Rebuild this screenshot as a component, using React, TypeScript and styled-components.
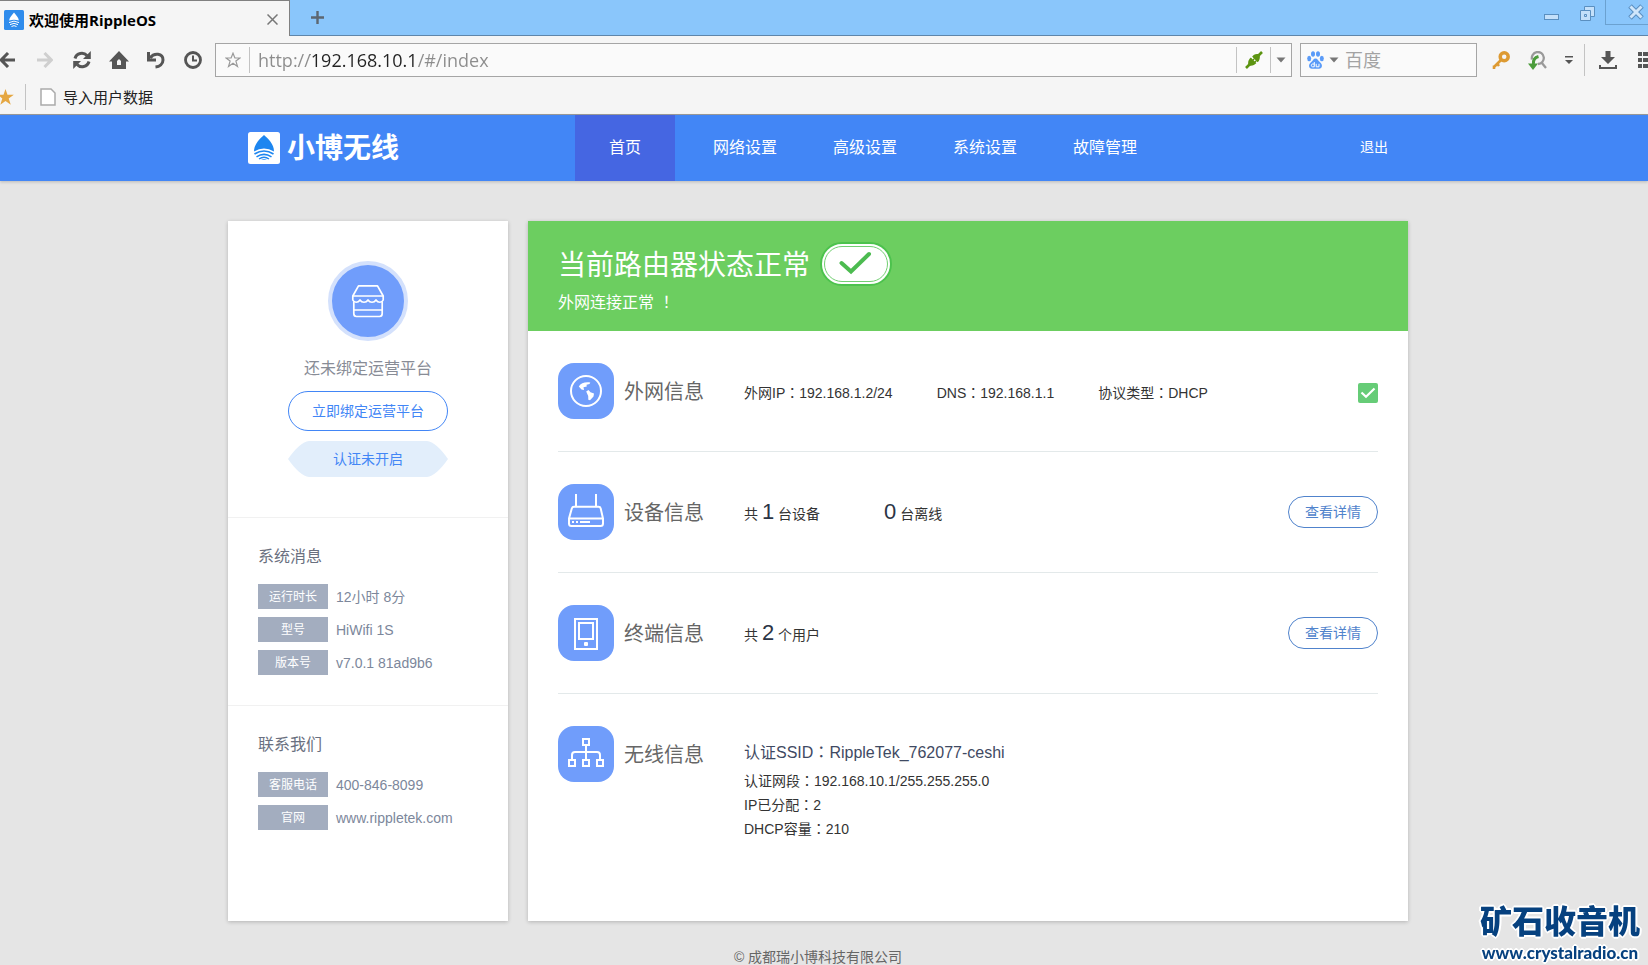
import React from "react";
import styled, { createGlobalStyle, css } from "styled-components";

const GlobalStyle = createGlobalStyle`
  *, *::before, *::after { box-sizing: border-box; }
  body {
    margin: 0;
    background: #e5e5e5;
    color: #333;
    font-family: "Liberation Sans", "Noto Sans CJK SC", sans-serif;
    font-size: 14px;
  }
  button, input { font: inherit; color: inherit; }
  button { background: none; border: 0; padding: 0; cursor: pointer; }
  h1, h2, h3, p, dl, dd, dt, ul { margin: 0; padding: 0; font-weight: 400; }
  a { color: inherit; text-decoration: none; }
  svg { display: block; flex: none; }
`;

const Page = styled.div`
  min-height: 100vh;
  display: flex;
  flex-direction: column;
`;

/* ---------- browser frame ---------- */

const Browser = styled.header`
  background: #f5f5f5;
  border-bottom: 1px solid #9c9c9c;
  font-family: "Open Sans", "Noto Sans CJK SC", sans-serif;
`;

const TabStrip = styled.div`
  display: flex;
  height: 36px;
  background: #8ac6fb;
`;

const Tab = styled.div`
  display: flex;
  align-items: center;
  gap: 5px;
  width: 290px;
  padding: 2px 10px 0 4px;
  background: #f5f5f5;
  border-top: 1px solid #808080;
  border-right: 1px solid #808080;
`;

const TabTitle = styled.span`
  flex: 1;
  color: #000;
  font-size: 15px;
  font-weight: 700;
  line-height: 20px;
`;

const StripRest = styled.div`
  flex: 1;
  display: flex;
  justify-content: space-between;
  align-items: flex-start;
  border-bottom: 1px solid #5f86aa;
`;

const StripButton = styled.button<{ $w: number; $boxed?: boolean }>`
  display: flex;
  justify-content: center;
  align-items: center;
  width: ${(p) => p.$w}px;
  height: ${(p) => (p.$boxed ? 25 : 34)}px;
  ${(p) =>
    p.$boxed &&
    css`
      border-left: 1px solid #6ba1d0;
      border-bottom: 1px solid #6ba1d0;
      padding-left: 18px;
    `}
`;

const WindowControls = styled.div`
  display: flex;
  align-items: flex-start;
`;

const Toolbar = styled.div`
  display: flex;
  align-items: center;
  padding-top: 7px;
`;

const ToolButton = styled.button<{ $w?: number; $start?: boolean }>`
  display: flex;
  align-items: center;
  justify-content: ${(p) => (p.$start ? "flex-start" : "center")};
  flex: none;
  width: ${(p) => p.$w ?? 37}px;
  height: 34px;
`;

const Field = styled.div<{ $w?: number }>`
  display: flex;
  align-items: center;
  ${(p) => (p.$w ? `flex: none; width: ${p.$w}px;` : "flex: 1; min-width: 0;")}
  height: 34px;
  background: #fafafa;
  border: 1px solid #a5a5a5;
`;

const AddressField = styled(Field)`
  margin: 0 8px 0 4px;
`;

const Divider = styled.span<{ $h: number }>`
  flex: none;
  width: 1px;
  height: ${(p) => p.$h}px;
  background: #c3c3c3;
`;

/* The host is darker than the scheme and the path. */
const AddressInput = styled.input`
  flex: 1;
  min-width: 0;
  height: 30px;
  margin: 0;
  padding: 0 0 0 8px;
  border: 0;
  outline: 0;
  font-size: 18px;
  background: linear-gradient(90deg, #8c8c8c 60px, #222 60px, #222 168px, #8c8c8c 168px);
  -webkit-background-clip: text;
  background-clip: text;
  -webkit-text-fill-color: transparent;
`;

const SearchInput = styled.input`
  flex: 1;
  min-width: 0;
  height: 30px;
  padding: 0 0 0 6px;
  border: 0;
  outline: 0;
  background: transparent;
  font-size: 18px;
  &::placeholder { color: #a3a3a3; opacity: 1; }
`;

const Tools = styled.div`
  display: flex;
  align-items: center;
  flex: none;
  width: 171px;
  padding-left: 5px;
  overflow: hidden;
`;

const Bookmarks = styled.div`
  display: flex;
  align-items: center;
  height: 37px;
  padding-top: 2px;
`;

const Bookmark = styled.a`
  display: flex;
  align-items: center;
  gap: 7px;
  margin-left: 14px;
  font-size: 15px;
  color: #222;
`;

/* ---------- router admin ---------- */

const NavBar = styled.nav`
  background: #4286f6;
  padding-right: 12px;
  box-shadow: 0 1px 3px rgba(0, 0, 0, 0.2);
`;

const NavInner = styled.div`
  display: flex;
  align-items: center;
  justify-content: space-between;
  max-width: 1180px;
  height: 66px;
  margin: 0 auto;
  padding: 0 20px;
  color: #fff;
`;

const Brand = styled.a`
  display: flex;
  align-items: center;
  gap: 7px;
  width: 327px;
`;

const BrandName = styled.span`
  padding-top: 2px;
  font-size: 28px;
  line-height: 32px;
  font-weight: 700;
`;

const Menu = styled.div`
  flex: 1;
  display: flex;
  gap: 20px;
`;

const MenuLink = styled.a<{ $active?: boolean }>`
  width: 100px;
  line-height: 66px;
  text-align: center;
  font-size: 16px;
  background: ${(p) => (p.$active ? "#4566e2" : "transparent")};
`;

const Logout = styled.a`
  line-height: 24px;
  padding-bottom: 2px;
`;

const Main = styled.main`
  flex: 1;
  padding: 40px 12px 0 0;
`;

const Columns = styled.div`
  display: flex;
  gap: 20px;
  max-width: 1180px;
  min-height: 700px;
  margin: 0 auto;
`;

const Card = styled.section<{ $w?: number }>`
  ${(p) => (p.$w ? `flex: none; width: ${p.$w}px;` : "flex: 1; min-width: 0;")}
  background: #fff;
  box-shadow: 0 1px 4px rgba(0, 0, 0, 0.22);
`;

const BindPanel = styled.div`
  display: flex;
  flex-direction: column;
  align-items: center;
  padding: 40px 0;
`;

const ShopBadge = styled.div`
  width: 80px;
  height: 80px;
  border: 4px solid #d4e1fc;
  border-radius: 50%;
  background: #709dfb;
`;

const BindText = styled.p`
  margin: 16px 0 10px;
  font-size: 16px;
  line-height: 24px;
  color: #888c96;
`;

const OutlineButton = styled.button<{ $large?: boolean }>`
  width: ${(p) => (p.$large ? 160 : 90)}px;
  height: ${(p) => (p.$large ? 40 : 32)}px;
  padding-bottom: 2px;
  border: 1px solid ${(p) => (p.$large ? "#4286f6" : "#5083cc")};
  border-radius: 20px;
  color: ${(p) => (p.$large ? "#4286f6" : "#5083cc")};
  font-size: 14px;
`;

const AuthState = styled.span`
  width: 160px;
  margin-top: 10px;
  line-height: 36px;
  text-align: center;
  color: #4286f6;
  background: #e2eefb;
  clip-path: path("M0 18 Q12 1 21 0 H139 Q148 1 160 18 Q148 35 139 36 H21 Q12 35 0 18 Z");
`;

const InfoPanel = styled.div`
  padding: 27px 30px 30px;
  border-top: 1px solid #f1f1f1;
`;

const InfoTitle = styled.h3`
  margin-bottom: 15px;
  font-size: 16px;
  line-height: 24px;
  color: #6a7080;
`;

const InfoList = styled.dl`
  display: grid;
  grid-template-columns: 70px 1fr;
  grid-auto-rows: 25px;
  gap: 8px;
  line-height: 27px;
  color: #7c879b;
`;

const Tag = styled.dt`
  background: #a3adbf;
  color: #fff;
  font-size: 12px;
  text-align: center;
`;

const StatusBanner = styled.div`
  height: 110px;
  padding: 21px 30px 0;
  background: #6cce60;
  color: #fff;
`;

const StatusHead = styled.div`
  display: flex;
  align-items: center;
  gap: 10px;
`;

const StatusTitle = styled.h1`
  padding-top: 4px;
  font-size: 28px;
  line-height: 40px;
`;

const StatusText = styled.p`
  margin-top: 5px;
  font-size: 16px;
  line-height: 24px;
`;

const Rows = styled.div`
  padding: 0 30px;
`;

const Row = styled.section`
  display: flex;
  align-items: center;
  padding: 32px 0;
  border-bottom: 1px solid #e3e9ea;
  &:last-child {
    align-items: flex-start;
    border-bottom: 0;
  }
`;

const RowHead = styled.div`
  display: flex;
  align-items: center;
  gap: 10px;
  width: 186px;
`;

const IconTile = styled.div`
  width: 56px;
  height: 56px;
  border-radius: 16px;
  background: #709dfb;
`;

const RowTitle = styled.h2`
  padding-top: 2px;
  font-size: 20px;
  line-height: 28px;
  color: #666;
`;

const Facts = styled.div`
  flex: 1;
  display: flex;
  gap: 44px;
  padding-top: 4px;
  line-height: 24px;
`;

const Counts = styled(Facts)`
  gap: 64px;
  padding-top: 2px;
`;

const Count = styled.strong`
  font-size: 22px;
  font-weight: 400;
  color: #2b3445;
`;

/* Full-width punctuation set in the middle of its cell. */
const Mark = styled.span`
  font-family: "Noto Sans CJK TC", sans-serif;
  line-height: 1;
`;

const StatusSlot = styled.div`
  padding-top: 4px;
`;

const Lines = styled.div`
  padding-top: 15px;
  line-height: 24px;
`;

const Ssid = styled.p`
  margin-bottom: 4px;
  font-size: 16px;
  color: #3f4a63;
`;

const Footer = styled.footer`
  padding: 28px 12px 0 0;
  line-height: 16px;
  text-align: center;
  color: #666;
`;

const Watermark = styled.div`
  position: fixed;
  right: 8px;
  bottom: 2px;
  color: #06417f;
  text-align: center;
  text-shadow: 2px 0 #fff, -2px 0 #fff, 0 2px #fff, 0 -2px #fff, 1px 1px #fff, -1px -1px #fff, 1px -1px #fff, -1px 1px #fff;
`;

const WatermarkName = styled.div`
  font: 900 32px/48px "Noto Sans CJK SC", sans-serif;
`;

const WatermarkSite = styled.div`
  font: 900 17px/20px Lato, sans-serif;
`;

/* ---------- drawings ---------- */

const Favicon = () => (
  <svg width="20" height="20" viewBox="0 0 20 20">
    <rect width="20" height="20" rx="1.5" fill="#2f8cec" />
    <path d="M10 2.5C7 6 5.3 8 5.2 10.5Q10 9 14.8 10.5C14.7 8 13 6 10 2.500Z" fill="#fff" />
    <path d="M5 12.600Q10 9.600 15 12.600M6 14.600Q10 12 14 14.600M7.500 16.500Q10 14.800 12.500 16.500" stroke="#fff" strokeWidth="1" fill="none" />
  </svg>
);

const BrandMark = () => (
  <svg width="32" height="32" viewBox="0 0 32 32">
    <rect width="32" height="32" rx="2.500" fill="#fff" />
    <path d="M16 3C12 6.500 6 12 6 19.500Q16 13.500 26 19.500C26 12 20 6.500 16 3Z" fill="#1d86f0" />
    <path d="M6.500 22Q16 16 25.500 22M8.500 24.800Q16 20 23.500 24.800" stroke="#1d86f0" strokeWidth="1.600" fill="none" />
    <path d="M11 27Q16 23.500 21 27" stroke="#1d86f0" strokeWidth="1.400" fill="none" />
    <path d="M13 28Q16 26.500 19 28Z" fill="#1d86f0" />
  </svg>
);

const Arrow = ({ flip, color }: { flip?: boolean; color: string }) => (
  <svg width="16" height="16" viewBox="0 0 16 16" fill="none" stroke={color} strokeWidth="3">
    {flip ? <path d="M0 8H14M7.500 1L14.300 8L7.500 15" /> : <path d="M15 8H1M8 1L1.200 8L8 15" />}
  </svg>
);

const Caret = ({ color = "#777" }: { color?: string }) => (
  <svg width="10" height="6" viewBox="0 0 10 6">
    <path d="M0.500 0.500H9.500L5 5.500Z" fill={color} />
  </svg>
);

const RefreshIcon = () => (
  <svg width="18" height="18" viewBox="0 0 18 18" fill="none" stroke="#555" strokeWidth="3">
    <path d="M2 7.500C3.500 1.800 10.500 .8 14 4.500M16 10.500C14.500 16.200 7.500 17.200 4 13.500" />
    <path d="M17.800 0V8H10Z M.2 18V10H8Z" fill="#555" stroke="none" />
  </svg>
);

const HomeIcon = () => (
  <svg width="20" height="18" viewBox="0 0 20 18">
    <path fillRule="evenodd" d="M10 0L20 10.500H17V18H3V10.500H0ZM8 14H12V10L10 8L8 10Z" fill="#555" />
  </svg>
);

const UndoIcon = () => (
  <svg width="18" height="18" viewBox="0 0 18 18" fill="none" stroke="#555" strokeWidth="3">
    <path d="M3 7C7 1.500 16 2 16 9C16 13 12.500 15.500 8.500 16" />
    <path d="M0 1V10.500H9V7.500H3V1Z" fill="#555" stroke="none" />
  </svg>
);

const ClockIcon = () => (
  <svg width="18" height="18" viewBox="0 0 18 18" fill="none" stroke="#555">
    <circle cx="9" cy="9" r="7.500" strokeWidth="2.800" />
    <path d="M9 4.500V9.500H13" strokeWidth="2" />
  </svg>
);

const StarOutline = () => (
  <svg width="16" height="16" viewBox="0 0 16 16">
    <path d="M8 1.200L9.900 6H15L10.900 9.100L12.500 14.500L8 11.300L3.500 14.500L5.100 9.100L1 6H6.100Z" fill="none" stroke="#999" strokeWidth="1.200" />
  </svg>
);

const PlugIcon = () => (
  <svg width="18" height="18" viewBox="0 0 18 18">
    <path d="M1 17L5 13M13 5L17 1" stroke="#5c9410" strokeWidth="2.600" />
    <path d="M3.500 14.500C2.500 10.500 4 8 6 6.500L11.500 12C9.500 14 7 15.500 3.500 14.500Z M14.500 3.500C15.500 7 14.500 9.500 12.500 11.500L7 6C8.500 3.500 11 2.500 14.500 3.500Z" fill="#5c9410" />
    <path d="M5.500 5L13 12.500" stroke="#fafafa" strokeWidth="1.200" />
    <path d="M8 9L9.500 7.500M10 11L11.500 9.500" stroke="#5c9410" strokeWidth="1.300" />
  </svg>
);

const PawIcon = () => (
  <svg width="17" height="18" viewBox="0 0 17 18" fill="#5a9bf8">
    <ellipse cx="2.200" cy="7.500" rx="2" ry="2.700" />
    <ellipse cx="6" cy="3" rx="2" ry="2.800" />
    <ellipse cx="11" cy="3" rx="2" ry="2.800" />
    <ellipse cx="14.800" cy="7.500" rx="2" ry="2.700" />
    <path d="M8.500 7.500C6.500 7.500 6 9.500 4 11.200C1 13.500 1.500 17.700 5 17.700H12C15.500 17.700 16 13.500 13 11.200C11 9.500 10.500 7.500 8.500 7.500Z" />
    <path d="M7.300 11V15.800H5.500C4 15.800 4 13 5.500 13H7.300M9.200 12.800V15.800H12V12.800" stroke="#fff" fill="none" />
  </svg>
);

const KeyIcon = () => (
  <svg width="18" height="18" viewBox="0 0 18 18">
    <circle cx="12.200" cy="5.800" r="4" fill="none" stroke="#dd9a32" strokeWidth="3.500" />
    <path d="M9 9L1.500 16.500M2 14.500V18M5 12.500L7 15" stroke="#dd9a32" strokeWidth="2.600" />
  </svg>
);

const MagnifierIcon = () => (
  <svg width="19" height="19" viewBox="0 0 19 19" fill="none">
    <path d="M4 8.500A6 6 0 1 1 10 13M13.500 11.500L18 17" stroke="#999" strokeWidth="2.300" />
    <path d="M10.500 5.500C7 6.500 5 9 5.500 13" stroke="#4b9c3b" strokeWidth="3" />
    <path d="M0 12.500H10L5 19Z" fill="#4b9c3b" />
  </svg>
);

const OverflowIcon = () => (
  <svg width="8" height="8" viewBox="0 0 8 8" fill="#555">
    <path d="M0 0H8V1.500H0ZM0 4H8L4 8Z" />
  </svg>
);

const DownloadIcon = () => (
  <svg width="18" height="18" viewBox="0 0 18 18" fill="#555">
    <path d="M6.500 0H11.500V6H16L9 13L2 6H6.500ZM0 14H2V16H16V14H18V18H0Z" />
  </svg>
);

const GridIcon = () => (
  <svg width="16" height="16" viewBox="0 0 16 16" fill="#555">
    <path d="M0 0H4V4H0ZM5 0H16V4H5ZM0 6H4V10H0ZM5 6H16V10H5ZM0 12H4V16H0ZM5 12H16V16H5Z" />
  </svg>
);

const ShopIcon = () => (
  <svg width="72" height="72" viewBox="4 4 72 72" fill="none" stroke="#fff" strokeWidth="1.700" strokeLinejoin="round">
    <path d="M30.500 24.800H49.500L55.200 35V39C54 42 50 42 48 39C46 42 42 42 40 39C38 42 34 42 32 39C30 42 26 42 24.800 39V35Z" />
    <path d="M24.800 35H55.200M25.800 41V52.500Q25.800 55.500 28.500 55.500H51.500Q54.200 55.500 54.200 52.500V41M25.800 49H54.200" />
  </svg>
);

const TickPill = () => (
  <svg width="72" height="44" viewBox="0 0 72 44" role="img" aria-label="正常">
    <rect x="1" y="1" width="70" height="42" rx="21" fill="#fff" stroke="#4cc24d" strokeWidth="2" />
    <rect x="4.500" y="4.500" width="63" height="35" rx="17.500" fill="none" stroke="#72cf72" />
    <path d="M21.500 21L31 29.500L49 12" fill="none" stroke="#4cbb50" strokeWidth="4" strokeLinecap="round" />
  </svg>
);

const TickBox = () => (
  <svg width="20" height="20" viewBox="0 0 20 20" role="img" aria-label="已连接">
    <rect width="20" height="20" rx="2" fill="#66cc77" />
    <path d="M3.500 9.500L8 13.800L16.500 5.500" fill="none" stroke="#fff" strokeWidth="2.200" />
  </svg>
);

const Glyph = ({ children }: { children: React.ReactNode }) => (
  <svg width="56" height="56" viewBox="0 0 56 56" fill="none" stroke="#fff" strokeWidth="2">
    {children}
  </svg>
);

const GlobeGlyph = () => (
  <Glyph>
    <circle cx="28" cy="28" r="15" />
    <path d="M20.800 23.500C23 20 27 18.700 32.300 19.500L31.500 21L28.500 21.800L28.800 23.500L25.500 24.200L26 27L23.500 26.500ZM28.200 28.500L30.500 27L32.500 29.200L36 30.500L35.500 33.500L32 37.200L30.300 36.800L30.200 33Z" fill="#fff" stroke="none" />
  </Glyph>
);

const RouterGlyph = () => (
  <Glyph>
    <path d="M18 10V23M38 10V23M16 22.800H40.500Q42.300 22.800 42.700 24.500L45 34.500V39.500Q45 42 42.500 42H13.500Q11 42 11 39.500V34.500L13.800 24.500Q14.300 22.800 16 22.800ZM11 34.500H45M22 38H32M14 38H16M18 38H20" />
  </Glyph>
);

const PhoneGlyph = () => (
  <Glyph>
    <path d="M17 14H39V44H17ZM21 18H35V34H21Z" />
    <rect x="26" y="37" width="4" height="4" rx="1" fill="#fff" stroke="none" />
  </Glyph>
);

const NetworkGlyph = () => (
  <Glyph>
    <path d="M25 13H31V19H25ZM11 34H17V40H11ZM25 34H31V40H25ZM39 34H45V40H39ZM28 20V33M14 33V29Q14 26 17 26H39Q42 26 42 29V33" />
  </Glyph>
);

/* ---------- composition ---------- */

const BrowserFrame = () => (
  <Browser>
    <TabStrip>
      <Tab>
        <Favicon />
        <TabTitle>欢迎使用RippleOS</TabTitle>
        <ToolButton $w={14} aria-label="关闭标签页">
          <svg width="11" height="11" viewBox="0 0 11 11" stroke="#777" strokeWidth="1.500">
            <path d="M.5 .5L10.500 10.500M10.500 .5L.5 10.500" />
          </svg>
        </ToolButton>
      </Tab>
      <StripRest>
        <StripButton $w={54} aria-label="新标签页">
          <svg width="13" height="13" viewBox="0 0 13 13" stroke="#5c6670" strokeWidth="2.400">
            <path d="M6.500 0V13M0 6.500H13" />
          </svg>
        </StripButton>
        <WindowControls>
          <StripButton $w={36} aria-label="最小化">
            <svg width="15" height="6" viewBox="0 0 15 6">
              <rect x=".5" y=".5" width="14" height="5" fill="#c4e0fa" stroke="#5a8fc0" />
            </svg>
          </StripButton>
          <StripButton $w={36} aria-label="还原">
            <svg width="15" height="22" viewBox="0 0 15 22" fill="#c4e0fa" stroke="#5a8fc0">
              <path d="M4.500 .5H14.500V10.500H4.500Z" />
              <path d="M.5 4.500H10.500V14.500H.5Z" />
              <path d="M4.500 8.500H6.500V10.500H4.500Z" />
            </svg>
          </StripButton>
          <StripButton $w={43} $boxed aria-label="关闭">
            <svg width="16" height="16" viewBox="0 0 16 16" fill="none">
              <path d="M2 2L14 14M14 2L2 14" stroke="#5a8fc0" strokeWidth="5" />
              <path d="M2.500 2.500L13.500 13.500M13.500 2.500L2.500 13.500" stroke="#cfe6fb" strokeWidth="3" />
            </svg>
          </StripButton>
        </WindowControls>
      </StripRest>
    </TabStrip>
    <Toolbar>
      <ToolButton $w={26} $start aria-label="后退"><Arrow color="#555" /></ToolButton>
      <ToolButton aria-label="前进"><Arrow flip color="#cfcfcf" /></ToolButton>
      <ToolButton aria-label="刷新"><RefreshIcon /></ToolButton>
      <ToolButton aria-label="主页"><HomeIcon /></ToolButton>
      <ToolButton aria-label="撤销"><UndoIcon /></ToolButton>
      <ToolButton aria-label="历史"><ClockIcon /></ToolButton>
      <AddressField>
        <ToolButton $w={33} aria-label="收藏"><StarOutline /></ToolButton>
        <Divider $h={26} />
        <AddressInput aria-label="地址" defaultValue="http://192.168.10.1/#/index" />
        <Divider $h={26} />
        <ToolButton $w={33} aria-label="连接"><PlugIcon /></ToolButton>
        <Divider $h={26} />
        <ToolButton $w={20} aria-label="更多地址"><Caret /></ToolButton>
      </AddressField>
      <Field $w={177}>
        <ToolButton $w={28} aria-label="搜索引擎"><PawIcon /></ToolButton>
        <ToolButton $w={10} aria-label="选择引擎"><Caret /></ToolButton>
        <SearchInput aria-label="搜索" placeholder="百度" />
      </Field>
      <Tools>
        <ToolButton $w={38} aria-label="密码"><KeyIcon /></ToolButton>
        <ToolButton $w={34} aria-label="查找"><MagnifierIcon /></ToolButton>
        <ToolButton $w={30} aria-label="更多工具"><OverflowIcon /></ToolButton>
        <Divider $h={32} />
        <ToolButton $w={46} aria-label="下载"><DownloadIcon /></ToolButton>
        <ToolButton $w={30} aria-label="菜单"><GridIcon /></ToolButton>
      </Tools>
    </Toolbar>
    <Bookmarks>
      <ToolButton $w={25} $start aria-label="收藏夹">
        <svg width="14" height="16" viewBox="2 0 14 16">
          <path d="M7.500 0L9.500 5.800H15.800L10.700 9.500L12.800 15.800L7.500 12L2.300 15.800L4.300 9.500L0 5.800H5.500Z" fill="#e5a742" />
        </svg>
      </ToolButton>
      <Divider $h={26} />
      <Bookmark href="#import">
        <svg width="16" height="18" viewBox="0 0 16 18">
          <path d="M1 1H11L15 5V17H1Z" fill="#fff" stroke="#aaa" strokeWidth="1.500" />
        </svg>
        导入用户数据
      </Bookmark>
    </Bookmarks>
  </Browser>
);

const systemInfo = [
  ["运行时长", "12小时 8分"],
  ["型号", "HiWifi 1S"],
  ["版本号", "v7.0.1 81ad9b6"],
];

const contactInfo = [
  ["客服电话", "400-846-8099"],
  ["官网", "www.rippletek.com"],
];

const InfoSection = ({ title, items }: { title: string; items: string[][] }) => (
  <InfoPanel>
    <InfoTitle>{title}</InfoTitle>
    <InfoList>
      {items.map(([name, value]) => (
        <React.Fragment key={name}>
          <Tag>{name}</Tag>
          <dd>{value}</dd>
        </React.Fragment>
      ))}
    </InfoList>
  </InfoPanel>
);

const Head = ({ icon, title }: { icon: React.ReactNode; title: string }) => (
  <RowHead>
    <IconTile>{icon}</IconTile>
    <RowTitle>{title}</RowTitle>
  </RowHead>
);

const Pair = ({ name, value }: { name: string; value: string }) => (
  <span>{name}<Mark>：</Mark>{value}</span>
);

const menu = ["首页", "网络设置", "高级设置", "系统设置", "故障管理"];

export default function App() {
  return (
    <Page>
      <GlobalStyle />
      <BrowserFrame />
      <NavBar>
        <NavInner>
          <Brand href="#/index"><BrandMark /><BrandName>小博无线</BrandName></Brand>
          <Menu>
            {menu.map((label, i) => (
              <MenuLink key={label} href={`#/${i}`} $active={i === 0}>{label}</MenuLink>
            ))}
          </Menu>
          <Logout href="#/logout">退出</Logout>
        </NavInner>
      </NavBar>
      <Main>
        <Columns>
          <Card $w={280}>
            <BindPanel>
              <ShopBadge><ShopIcon /></ShopBadge>
              <BindText>还未绑定运营平台</BindText>
              <OutlineButton $large>立即绑定运营平台</OutlineButton>
              <AuthState>认证未开启</AuthState>
            </BindPanel>
            <InfoSection title="系统消息" items={systemInfo} />
            <InfoSection title="联系我们" items={contactInfo} />
          </Card>
          <Card>
            <StatusBanner>
              <StatusHead>
                <StatusTitle>当前路由器状态正常</StatusTitle>
                <TickPill />
              </StatusHead>
              <StatusText>外网连接正常 <Mark>！</Mark></StatusText>
            </StatusBanner>
            <Rows>
              <Row>
                <Head icon={<GlobeGlyph />} title="外网信息" />
                <Facts>
                  <Pair name="外网IP" value="192.168.1.2/24" />
                  <Pair name="DNS" value="192.168.1.1" />
                  <Pair name="协议类型" value="DHCP" />
                </Facts>
                <StatusSlot><TickBox /></StatusSlot>
              </Row>
              <Row>
                <Head icon={<RouterGlyph />} title="设备信息" />
                <Counts>
                  <span>共 <Count>1</Count> 台设备</span>
                  <span><Count>0</Count> 台离线</span>
                </Counts>
                <OutlineButton>查看详情</OutlineButton>
              </Row>
              <Row>
                <Head icon={<PhoneGlyph />} title="终端信息" />
                <Counts>
                  <span>共 <Count>2</Count> 个用户</span>
                </Counts>
                <OutlineButton>查看详情</OutlineButton>
              </Row>
              <Row>
                <Head icon={<NetworkGlyph />} title="无线信息" />
                <Lines>
                  <Ssid><Pair name="认证SSID" value="RippleTek_762077-ceshi" /></Ssid>
                  <p><Pair name="认证网段" value="192.168.10.1/255.255.255.0" /></p>
                  <p><Pair name="IP已分配" value="2" /></p>
                  <p><Pair name="DHCP容量" value="210" /></p>
                </Lines>
              </Row>
            </Rows>
          </Card>
        </Columns>
      </Main>
      <Footer>© 成都瑞小博科技有限公司</Footer>
      <Watermark>
        <WatermarkName>矿石收音机</WatermarkName>
        <WatermarkSite>www.crystalradio.cn</WatermarkSite>
      </Watermark>
    </Page>
  );
}
